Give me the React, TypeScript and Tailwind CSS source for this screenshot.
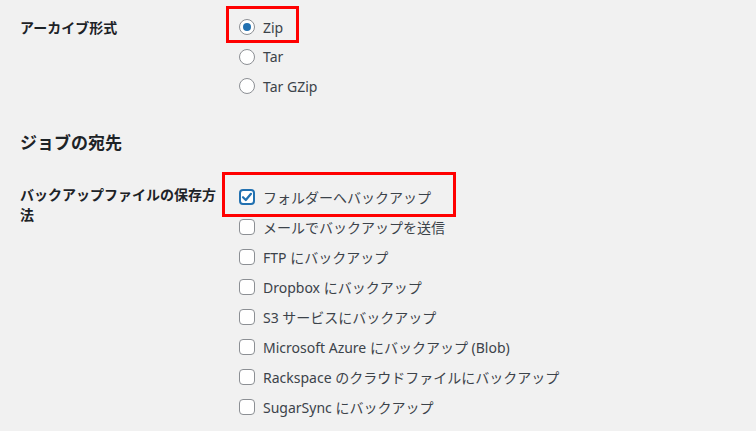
import React from "react";

const font = { fontFamily: '"Noto Sans", "Noto Sans CJK JP", sans-serif' };

function Radio({ checked }: { checked?: boolean }) {
  return (
    <span className="w-4 h-4 rounded-full border border-[#8c8f94] bg-white flex items-center justify-center shrink-0">
      {checked && <span className="w-2 h-2 rounded-full bg-[#2271b1]" />}
    </span>
  );
}

function Checkbox({ checked }: { checked?: boolean }) {
  if (checked) {
    return (
      <span className="w-4 h-4 rounded-[4px] border-2 border-[#2271b1] bg-white flex items-center justify-center shrink-0">
        <svg width="12" height="12" viewBox="0 0 12 12">
          <path d="M2 6.2 L4.8 9 L10 2.8" fill="none" stroke="#2271b1" strokeWidth="2.2" strokeLinecap="round" strokeLinejoin="round" />
        </svg>
      </span>
    );
  }
  return <span className="w-4 h-4 rounded-[4px] border border-[#8c8f94] bg-white shrink-0" />;
}

export default function App() {
  const boxes = [
    "メールでバックアップを送信",
    "FTP にバックアップ",
    "Dropbox にバックアップ",
    "S3 サービスにバックアップ",
    "Microsoft Azure にバックアップ (Blob)",
    "Rackspace のクラウドファイルにバックアップ",
    "SugarSync にバックアップ",
  ];
  return (
    <div className="w-[756px] h-[431px] bg-[#f1f1f1] overflow-hidden text-[14px] text-[#3c434a]" style={font}>
      <div className="pl-5 pt-3 flex">
        <div className="w-[219px] h-[30px] flex items-center font-bold text-[#1d2327]">アーカイブ形式</div>
        <div className="flex flex-col">
          <div className="relative h-[30px] flex items-center gap-2">
            <div className="absolute left-[-13px] top-[-6px] w-[73px] h-[37px] border-[3px] border-[#ff0000]" />
            <Radio checked />
            <span>Zip</span>
          </div>
          <div className="h-[29px] flex items-center gap-2">
            <Radio />
            <span>Tar</span>
          </div>
          <div className="h-[30px] flex items-center gap-2">
            <Radio />
            <span>Tar GZip</span>
          </div>
        </div>
      </div>
      <h2 className="pl-5 mt-[30px] text-[17px] font-bold text-[#1d2327] leading-[24px]">ジョブの宛先</h2>
      <div className="pl-5 mt-[27px] flex">
        <div className="w-[219px] pt-[3px] font-bold text-[#1d2327] leading-[20px]">
          <div className="w-[200px]">バックアップファイルの保存方法</div>
        </div>
        <div className="flex flex-col">
          <div className="relative h-[30px] flex items-center gap-2">
            <div className="absolute left-[-17px] top-[-10px] w-[234px] h-[45px] border-[3px] border-[#ff0000]" />
            <Checkbox checked />
            <span>フォルダーへバックアップ</span>
          </div>
          {boxes.map((b) => (
            <div key={b} className="h-[30px] flex items-center gap-2">
              <Checkbox />
              <span>{b}</span>
            </div>
          ))}
        </div>
      </div>
    </div>
  );
}
